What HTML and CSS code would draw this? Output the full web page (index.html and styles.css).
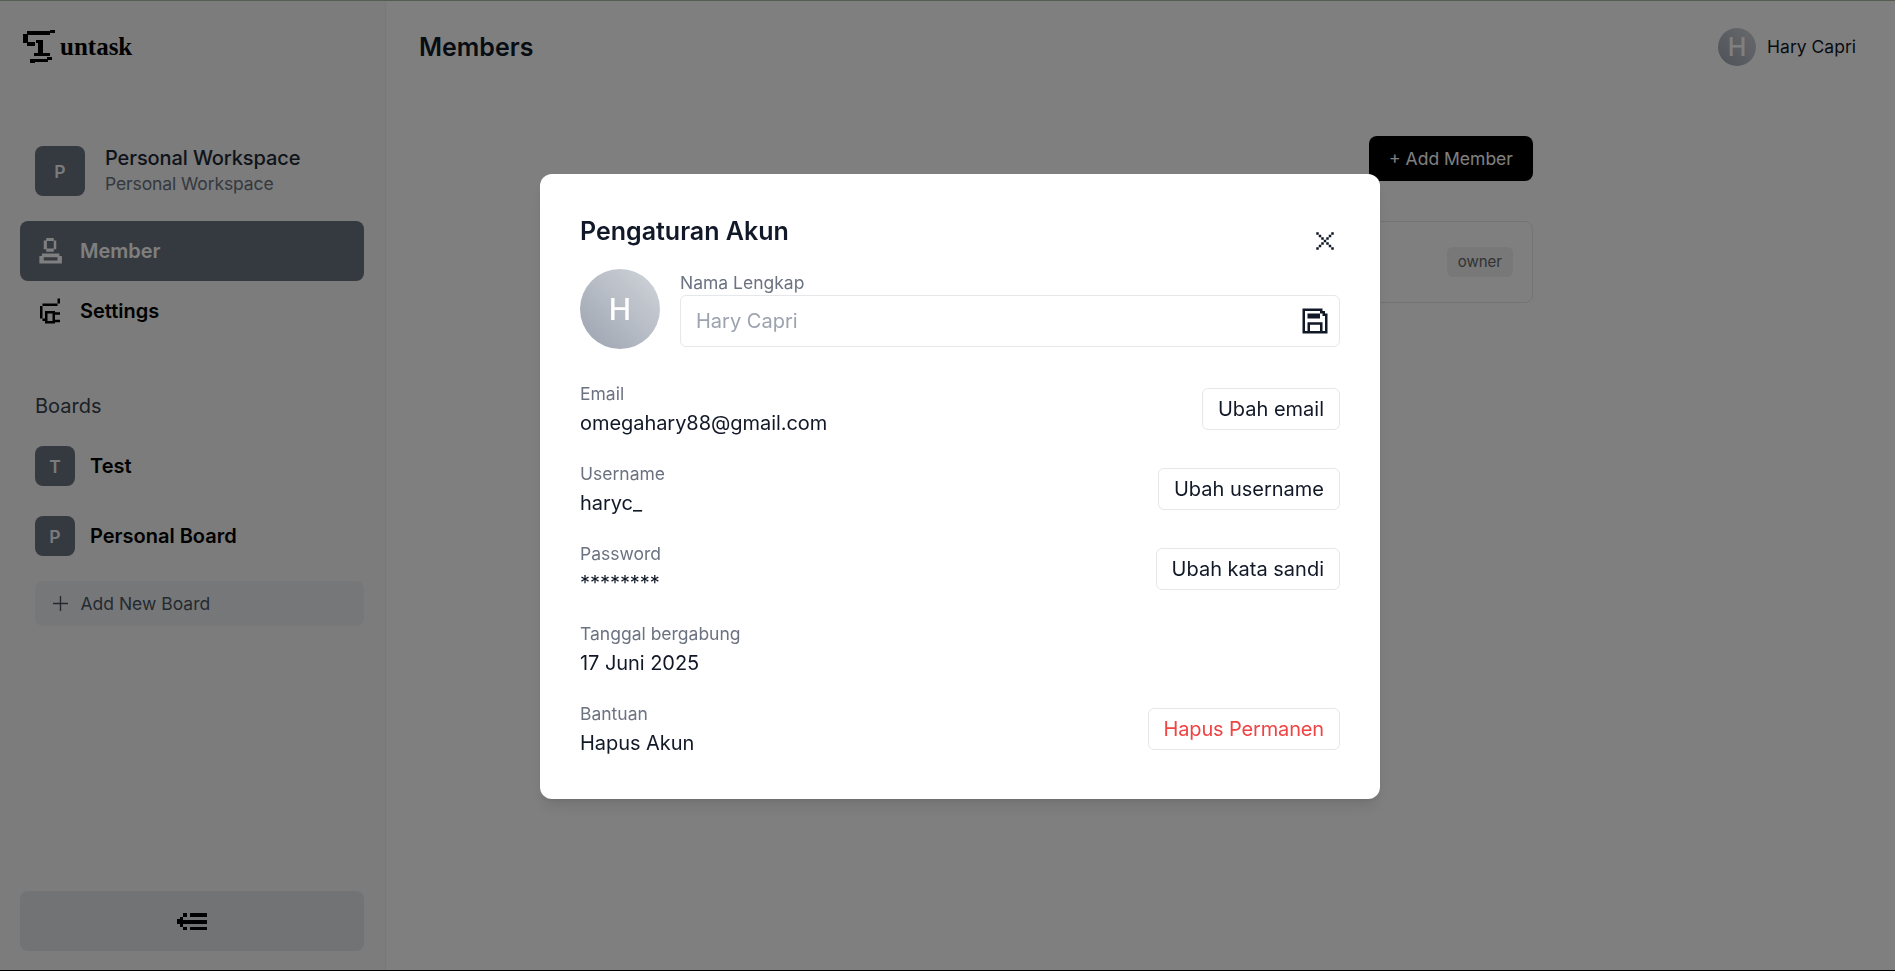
FILE: index.html
```html
<!DOCTYPE html>
<html lang="id">
<head>
<meta charset="utf-8">
<title>Untask - Members</title>
<link rel="stylesheet" href="styles.css">
</head>
<body>
<div class="app">
  <aside class="sidebar">
    <div class="logo">
      <svg class="logo-mark" viewBox="0 0 32 33" shape-rendering="crispEdges" aria-hidden="true">
        <path fill="#000" d="M4 1h23v4H4zM27 0h5v3h-5zM0 4h5v9H0zM4 12h8v4H4zM13 10h7v3h-7zM15 13h5v11h-5zM11 23h16v3H11zM7 29h5v4H7zM11 29h14v3H11zM24 27h5v3h-5z"/>
      </svg>
      <span class="logo-text">untask</span>
    </div>
    <div class="workspace">
      <div class="tile tile-lg">P</div>
      <div class="workspace-text">
        <div class="workspace-name">Personal Workspace</div>
        <div class="workspace-sub">Personal Workspace</div>
      </div>
    </div>
    <nav class="nav">
      <a class="nav-item active">
        <svg class="nav-icon" viewBox="0 0 24 24" aria-hidden="true">
          <path fill="currentColor" fill-rule="evenodd" d="M9 1.500h6v2h2v7h-2v2H9v-2H7v-7h2zM9.500 4v6h5.500V4zM5.500 14h14v2h2v6H3.500v-6h2zM7 17v2.500h11V17z"/>
        </svg>
        <span>Member</span>
      </a>
      <a class="nav-item">
        <svg class="nav-icon" viewBox="0 0 24 24" aria-hidden="true">
          <path fill="currentColor" fill-rule="evenodd" d="M18 2h2v4h-2zM6 6h12v2H6zM4 8h2v10H4zM6 18h2v2H6zM8 12h8v10H8zM10 14v6h4v-6zM16 13h4v2h-4zM16 19h4v2h-4z"/>
        </svg>
        <span>Settings</span>
      </a>
    </nav>
    <div class="boards">
      <div class="boards-title">Boards</div>
      <div class="board"><div class="tile">T</div><span>Test</span></div>
      <div class="board"><div class="tile">P</div><span>Personal Board</span></div>
      <div class="add-board">
        <svg class="plus" viewBox="0 0 15 15" aria-hidden="true"><path d="M7.5 0v15M0 7.5h15" stroke="currentColor" stroke-width="1.4" fill="none"/></svg>
        <span>Add New Board</span>
      </div>
    </div>
    <button class="collapse" type="button" aria-label="Collapse">
      <svg viewBox="0 0 30 17" shape-rendering="crispEdges" aria-hidden="true">
        <path fill="#000" d="M13 0h17v3.5H13zM0 7h30v3.5H0zM13 13.500h17V17H13zM6 0h4v3.500H6zM3 3.500h3V7H3zM3 10.500h3v3H3zM6 13.500h4V17H6zM0 6h3v5H0z"/>
      </svg>
    </button>
  </aside>

  <main class="main">
    <header class="topbar">
      <h1 class="page-title">Members</h1>
      <div class="user">
        <div class="user-avatar">H</div>
        <span class="user-name">Hary Capri</span>
      </div>
    </header>
    <section class="content">
      <div class="content-inner">
        <div class="content-actions"><button class="add-member" type="button">+ Add Member</button></div>
        <div class="member-card"><span class="role">owner</span></div>
      </div>
    </section>
  </main>
</div>

<div class="overlay"></div>

<div class="modal-wrap">
  <div class="modal">
    <div class="modal-head">
      <h2 class="modal-title">Pengaturan Akun</h2>
      <svg class="close" viewBox="0 0 24 24" aria-hidden="true">
        <path fill="#111827" d="M5 5h2v2H5zM7 7h2v2H7zM9 9h2v2H9zM11 11h2v2h-2zM13 13h2v2h-2zM15 15h2v2h-2zM17 17h2v2h-2zM17 5h2v2h-2zM15 7h2v2h-2zM13 9h2v2h-2zM9 13h2v2H9zM7 15h2v2H7zM5 17h2v2H5z"/>
      </svg>
    </div>
    <div class="name-row">
      <div class="avatar">H</div>
      <div class="name-field">
        <label class="label">Nama Lengkap</label>
        <div class="input">
          <span class="placeholder">Hary Capri</span>
          <svg class="save" viewBox="0 0 24 24" aria-hidden="true">
            <path fill="#111827" fill-rule="evenodd" d="M2 2h16v2h2v2h2v16H2zM4 4v16h2v-7h12v7h2V8h-2V6h-2V4zM8 15v5h8v-5zM6 6h10v4H6z"/>
          </svg>
        </div>
      </div>
    </div>
    <div class="row">
      <div class="info"><div class="label">Email</div><div class="value">omegahary88@gmail.com</div></div>
      <button class="btn" type="button">Ubah email</button>
    </div>
    <div class="row">
      <div class="info"><div class="label">Username</div><div class="value">haryc_</div></div>
      <button class="btn" type="button">Ubah username</button>
    </div>
    <div class="row">
      <div class="info"><div class="label">Password</div><div class="value">********</div></div>
      <button class="btn" type="button">Ubah kata sandi</button>
    </div>
    <div class="row">
      <div class="info"><div class="label">Tanggal bergabung</div><div class="value">17 Juni 2025</div></div>
    </div>
    <div class="row row-last">
      <div class="info"><div class="label">Bantuan</div><div class="value">Hapus Akun</div></div>
      <button class="btn btn-danger" type="button">Hapus Permanen</button>
    </div>
  </div>
</div>
</body>
</html>
```

FILE: styles.css
```css
* { box-sizing: border-box; }
html, body { margin: 0; height: 100%; overflow: hidden; }
body {
  font-family: Inter, "Liberation Sans", sans-serif;
  color: #111827;
  background: #fff;
}
button { font-family: inherit; cursor: pointer; }

.app {
  display: flex;
  height: 971px;
  overflow: hidden;
  border-top: 1px solid #a7bd9c;
  border-bottom: 1px solid #000;
}

/* Sidebar */
.sidebar {
  width: 386px;
  flex: none;
  display: flex;
  flex-direction: column;
  background: #f6f8f7;
  border-right: 1px solid #f0f0f0;
  padding: 0 21px 19px 20px;
}
.logo { display: flex; align-items: center; gap: 5px; height: 91px; margin-left: 3px; padding-bottom: 1px; }
.logo-mark { width: 32px; height: 33px; }
.logo-text {
  font-family: "Liberation Serif", serif;
  font-weight: 700;
  font-size: 25px;
  color: #000;
  margin-top: 1px;
}
.workspace { display: flex; align-items: center; gap: 20px; margin: 54px 0 0 15px; }
.tile {
  width: 40px; height: 40px;
  flex: none;
  display: flex; align-items: center; justify-content: center;
  border-radius: 8px;
  background: #6b7280;
  color: #f3f4f6;
  font-weight: 600;
  font-size: 17.5px;
}
.tile-lg { width: 50px; height: 50px; }
.workspace-name { font-size: 20px; font-weight: 500; color: #1f2937; line-height: 25px; letter-spacing: -0.1px; }
.workspace-sub { font-size: 17.5px; color: #6b7280; line-height: 25px; letter-spacing: -0.1px; }

.nav { display: flex; flex-direction: column; margin-top: 25px; }
.nav-item {
  display: flex; align-items: center; gap: 15px;
  height: 60px;
  padding: 0 15px;
  border-radius: 8px;
  font-size: 20px;
  font-weight: 600;
  color: #000;
}
.nav-item.active { background: #6b7280; color: #fff; }
.nav-icon { width: 30px; height: 30px; flex: none; }

.boards { margin: 0 0 0 15px; padding-top: 53px; }
.boards-title { font-size: 20px; color: #374151; line-height: 25px; margin-bottom: 27px; }
.board { display: flex; align-items: center; gap: 15px; height: 40px; margin-bottom: 30px; font-size: 20px; font-weight: 600; color: #000; }
.add-board {
  display: flex; align-items: center; gap: 13px;
  height: 45px;
  margin-top: -5px;
  padding-left: 17.5px;
  border-radius: 8px;
  background: #eceef0;
  font-size: 17.5px;
  color: #4b5563;
}
.plus { width: 15px; height: 15px; }
.collapse {
  margin-top: auto;
  height: 60px;
  padding: 0;
  border: 0;
  border-radius: 8px;
  background: #e5e7eb;
  display: flex; align-items: center; justify-content: center;
}
.collapse svg { width: 30px; height: 17px; }

/* Main */
.main { flex: 1; min-width: 0; display: flex; flex-direction: column; }
.topbar {
  display: flex; align-items: center; justify-content: space-between;
  height: 91px;
  padding: 0 39px 0 33px;
}
.page-title { margin: 0; font-size: 25px; line-height: 32px; font-weight: 600; color: #111827; }
.user { display: flex; align-items: center; gap: 11px; }
.user-avatar {
  width: 38px; height: 38px;
  border-radius: 50%;
  background: linear-gradient(45deg, #9ca3af, #d1d5db);
  color: #fff;
  display: flex; align-items: center; justify-content: center;
  font-size: 25px;
  font-weight: 500;
}
.user-name { font-size: 17.5px; color: #111827; }
.content { display: flex; justify-content: center; }
.content-inner { width: 785px; padding-top: 44px; }
.content-actions { display: flex; justify-content: flex-end; }
.add-member {
  width: 164px; height: 45px;
  border: 0; border-radius: 8px;
  background: #000;
  color: #fff;
  font-size: 17.5px;
}
.member-card {
  display: flex; align-items: center; justify-content: flex-end;
  height: 82px;
  margin-top: 40px;
  padding-right: 19px;
  border: 1px solid #e5e7eb;
  border-radius: 8px;
}
.role {
  padding: 0 11px;
  height: 30px;
  line-height: 29px;
  border-radius: 6px;
  background: #f0f0f0;
  font-size: 15px;
  color: #666;
}

/* Overlay + modal */
.overlay { position: fixed; inset: 0; background: rgba(0,0,0,.5); }
.modal-wrap {
  position: fixed; inset: 0;
  display: flex; justify-content: center; align-items: flex-start;
  padding: 174px 0 0 25px;
}
.modal {
  width: 840px;
  height: 625px;
  padding: 40px;
  background: #fff;
  border-radius: 12px;
  box-shadow: 0 10px 15px -3px rgba(0,0,0,.1), 0 4px 6px -4px rgba(0,0,0,.1);
}
.modal-head { display: flex; justify-content: space-between; align-items: flex-start; height: 55px; }
.modal-title { margin: 0; padding-top: 1px; font-size: 25px; line-height: 32px; font-weight: 600; color: #111827; }
.close { width: 30px; height: 30px; margin-top: 12px; }
.name-row { display: flex; align-items: flex-start; gap: 20px; margin-bottom: 32px; }
.avatar {
  width: 80px; height: 80px; flex: none;
  border-radius: 50%;
  background: linear-gradient(45deg, #9ca3af, #d1d5db);
  color: #fff;
  display: flex; align-items: center; justify-content: center;
  font-size: 30px;
  font-weight: 500;
}
.name-field { flex: 1; padding-top: 1px; }
.label { display: block; font-size: 17.5px; line-height: 25px; color: #6b7280; }
.input {
  display: flex; align-items: center; justify-content: space-between;
  height: 52px;
  padding: 0 9px 0 15px;
  border: 1px solid #e5e7eb;
  border-radius: 6px;
}
.placeholder { font-size: 20px; color: #9ca3af; }
.save { width: 30px; height: 30px; }
.row { display: flex; align-items: center; justify-content: space-between; height: 55px; margin-bottom: 25px; }
.row-last { margin-bottom: 0; }
.info { align-self: flex-start; }
.value { margin-top: 2px; font-size: 20px; line-height: 30px; color: #111827; letter-spacing: -0.05px; }
.btn {
  height: 42px;
  padding: 0 15px;
  background: #fff;
  border: 1px solid #e5e7eb;
  border-radius: 6px;
  font-size: 20px;
  color: #111827;
}
.btn-danger { color: #ef4444; letter-spacing: -0.15px; }
```
